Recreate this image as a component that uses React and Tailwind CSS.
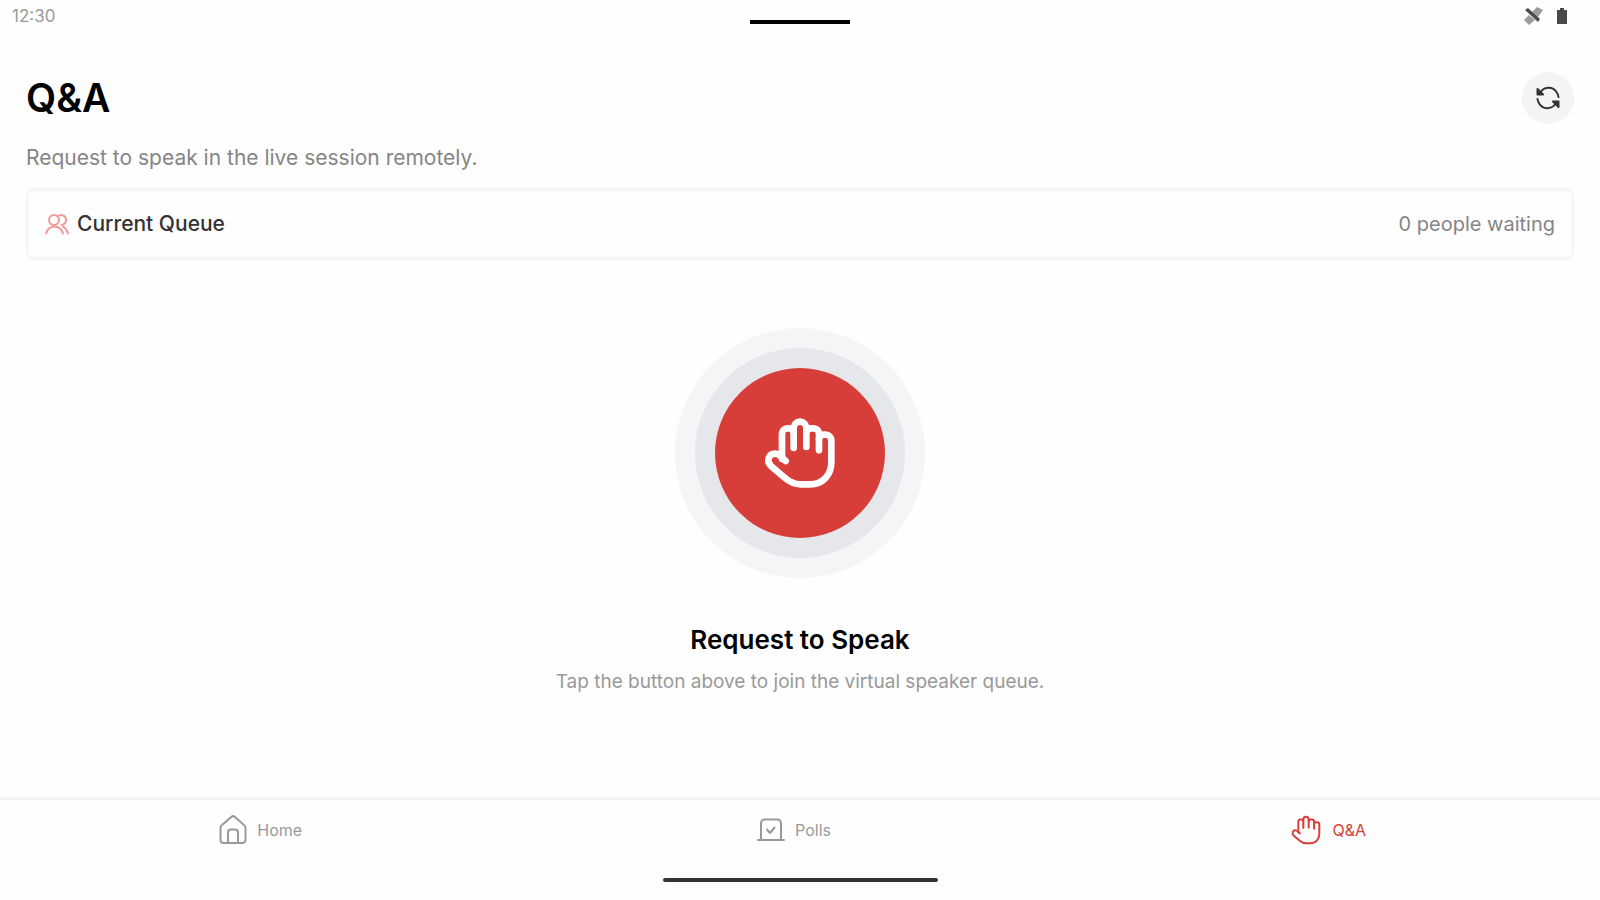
import { useState } from 'react'

function HandIcon({ className, stroke }) {
  return (
    <svg viewBox="0 0 232 240" className={className} fill="none" stroke="currentColor" strokeWidth={stroke} strokeLinecap="round" strokeLinejoin="round" aria-hidden="true">
      <path d="M62 138V62a16 16 0 0 1 16-16h6q12 0 13 14" />
      <path d="M97 105V46a19 20 0 0 1 38 0v56" />
      <path d="M135 60q1-14 14-14h8a16 16 0 0 1 16 16v50" />
      <path d="M173 78q2-13 14-13h6a17 17 0 0 1 17 17v66c0 38-26 66-64 66h-28c-20 0-36-9-48-20l-42-36c-14-14-5-36 13-36 8 0 13 4 18 9l14 13" />
    </svg>
  )
}

function HomeIcon() {
  return (
    <svg viewBox="0 0 28 32" className="w-7 h-8" fill="none" stroke="currentColor" strokeWidth="2" strokeLinecap="round" strokeLinejoin="round" aria-hidden="true">
      <path d="M1.500 14a4 4 0 0 1 1.500-3L12.500 2.800a2.400 2.400 0 0 1 3.200 0L25 11a4 4 0 0 1 1.500 3v12a3 3 0 0 1-3 3h-19a3 3 0 0 1-3-3z" />
      <path d="M9 29V18.500a3 3 0 0 1 3-3h4a3 3 0 0 1 3 3V29" />
    </svg>
  )
}

function PollsIcon() {
  return (
    <svg viewBox="0 0 28 24" className="w-7 h-6" fill="none" stroke="currentColor" strokeWidth="2" strokeLinecap="round" strokeLinejoin="round" aria-hidden="true">
      <path d="M4 22V5a3.500 3.500 0 0 1 3.500-3.500h13A3.500 3.500 0 0 1 24 5v17" />
      <path d="M1 22h26" />
      <path d="m10 11.500 3 3.500 4.500-5.500" />
    </svg>
  )
}

function QueueIcon() {
  return (
    <svg viewBox="0 0 24 24" className="w-6 h-6 text-[#ee9a9a]" fill="none" stroke="currentColor" strokeWidth="2" strokeLinecap="round" strokeLinejoin="round" aria-hidden="true">
      <circle cx="9" cy="8" r="5" />
      <path d="M1 21.500c1.500-4.500 4.500-7 8.500-7s7 2.500 8.500 7" />
      <path d="M14 3.500a5 5 0 1 1 2.500 9.500" />
      <path d="M18 14.500c2.500 1.500 4 3.500 5 7" />
    </svg>
  )
}

function RefreshIcon() {
  return (
    <svg viewBox="0 0 24 24" className="w-6 h-6" fill="none" stroke="currentColor" strokeWidth="2" strokeLinecap="round" strokeLinejoin="round" aria-hidden="true">
      <path d="M5 5.500C9 .5 17 .5 20.500 6c1.200 1.700 1.800 3.300 2 5" />
      <path d="M19 18.500c-4 5-12 5-15.500-.5C2.300 16.300 1.700 14.700 1.500 13" />
      <path d="M1.500 3v5.500H7z" fill="currentColor" />
      <path d="M22.500 21v-5.500H17z" fill="currentColor" />
    </svg>
  )
}

const tabs = [
  { id: 'home', label: 'Home', icon: <HomeIcon /> },
  { id: 'polls', label: 'Polls', icon: <PollsIcon /> },
  { id: 'qa', label: 'Q&A', icon: <HandIcon className="w-[34px] h-[34px]" stroke={14} /> },
]

export default function App() {
  const [active, setActive] = useState('qa')

  return (
    <div className="min-h-screen flex flex-col bg-[#fefefe] text-black font-['Inter',sans-serif]">
      {/* Status bar */}
      <div className="h-8 grid grid-cols-3 items-center px-3 text-[#9a9a9a]">
        <span className="text-[17px] leading-6">12:30</span>
        <div className="justify-self-center w-25 h-1 bg-black mt-3" />
        <div className="justify-self-end flex items-center gap-3 pr-5 text-[#4a4a4a]">
          <svg viewBox="0 0 20 18" className="w-5 h-[18px]" fill="currentColor" aria-hidden="true">
            <path d="m1 3 3-2 12 11-2 3z" />
            <path d="m0 13 5-5 6 5-6 5zM8 5l5-5 6 3-5 7z" opacity=".55" />
          </svg>
          <svg viewBox="0 0 12 18" className="w-3 h-[18px]" fill="currentColor" aria-hidden="true">
            <path d="M4 1h4v2h3v14H1V3h3z" />
          </svg>
        </div>
      </div>

      <main className="flex-1 flex flex-col px-[26px] pt-10">
        <div className="flex items-center justify-between">
          <h1 className="text-[39px] leading-[52px] font-semibold">Q&amp;A</h1>
          <button aria-label="Refresh" className="w-13 h-13 rounded-full bg-[#f4f4f4] flex items-center justify-center text-[#333]">
            <RefreshIcon />
          </button>
        </div>
        <p className="mt-5 text-[21px] leading-7 text-[#858585]">Request to speak in the live session remotely.</p>

        {/* Queue card */}
        <div className="mt-4 h-18 px-4 flex items-center justify-between border-3 border-[#f6f6f6] rounded-md">
          <div className="flex items-center gap-2">
            <QueueIcon />
            <h2 className="text-[21px] leading-7 font-medium text-[#333]">Current Queue</h2>
          </div>
          <span className="text-[20px] leading-7 text-[#858585]">0 people waiting</span>
        </div>

        {/* Request button */}
        <div className="mt-17 flex flex-col items-center text-center">
          <div className="p-5 rounded-full bg-[#f3f5f7]">
            <div className="p-5 rounded-full bg-[#e5e7eb]">
              <button aria-label="Request to Speak" className="w-[170px] h-[170px] rounded-full bg-[#d73e3a] flex items-center justify-center text-white">
                <HandIcon className="w-20 h-20" stroke={20} />
              </button>
            </div>
          </div>
          <h2 className="mt-12 text-[26px] leading-7 font-semibold">Request to Speak</h2>
          <p className="mt-3 text-[19px] leading-8 text-[#999]">Tap the button above to join the virtual speaker queue.</p>
        </div>
      </main>

      {/* Bottom tabs */}
      <nav className="h-[103px] flex flex-col justify-between border-t-3 border-[#f4f4f4]">
        <div className="grid grid-cols-3 pt-3">
          {tabs.map(tab => (
            <button
              key={tab.id}
              onClick={() => setActive(tab.id)}
              className={`h-9 pr-3 flex items-center justify-center gap-2.5 text-base ${active === tab.id ? 'text-[#d73e3a]' : 'text-[#999]'}`}
            >
              {tab.icon}
              <span>{tab.label}</span>
            </button>
          ))}
        </div>
        <div className="self-center w-[275px] h-1 mb-[18px] rounded-full bg-[#333]" />
      </nav>
    </div>
  )
}
